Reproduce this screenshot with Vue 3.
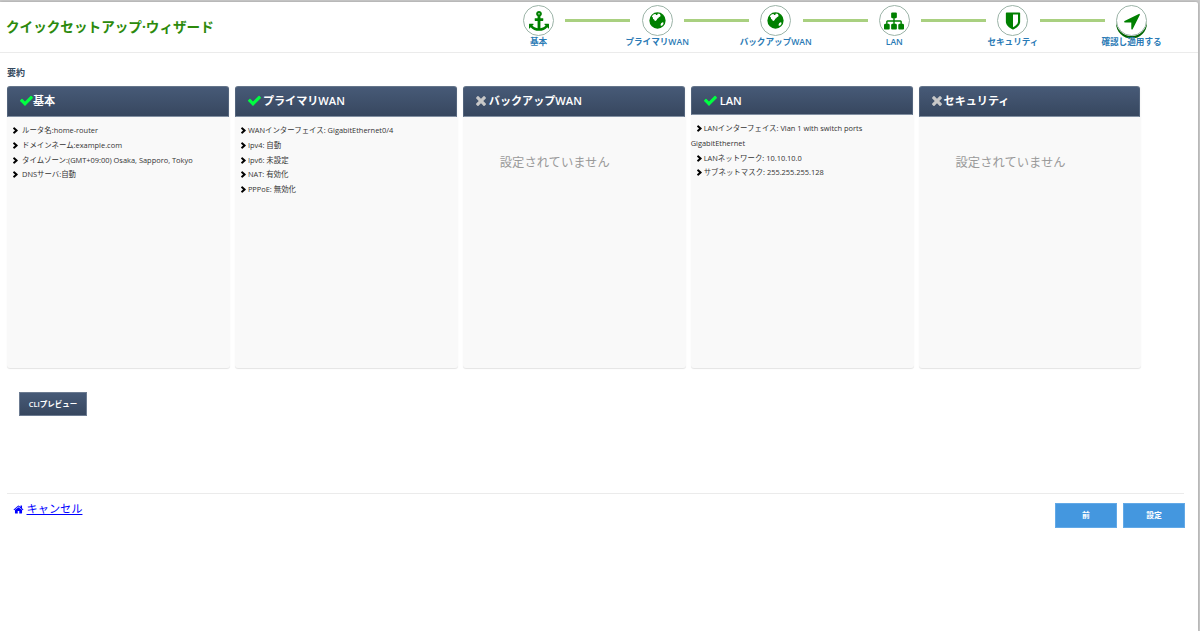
<script setup>
const icons = {
  check: 'M1671 566q0 40-28 68l-724 724-136 136q-28 28-68 28t-68-28l-136-136-362-362q-28-28-28-68t28-68l136-136q28-28 68-28t68 28l294 295 656-657q28-28 68-28t68 28l136 136q28 28 28 68z',
  times: 'M1490 1322q0 40-28 68l-136 136q-28 28-68 28t-68-28l-294-294-294 294q-28 28-68 28t-68-28l-136-136q-28-28-28-68t28-68l294-294-294-294q-28-28-28-68t28-68l136-136q28-28 68-28t68 28l294 294 294-294q28-28 68-28t68 28l136 136q28 28 28 68t-28 68l-294 294 294 294q28 28 28 68z',
  chevron: 'M1363 941l-742 662q-19 19-45 19t-45-19l-206-206q-19-19-19-45t19-45l431-411-431-411q-19-19-19-45t19-45l206-206q19-19 45-19t45 19l742 662q19 19 19 45t-19 45z',
  home: 'M1472 992v480q0 26-19 45t-45 19h-384v-384h-256v384h-384q-26 0-45-19t-19-45v-480q0-1 .5-3t.5-3l575-474 575 474q1 2 1 6zm223-69l-62 74q-8 9-21 11h-3q-13 0-21-7l-692-577-692 577q-12 8-24 7-13-2-21-11l-62-74q-8-10-7-23.5t11-21.5l719-599q32-26 76-26t76 26l244 204v-195q0-14 9-23t23-9h192q14 0 23 9t9 23v408l219 182q10 8 11 21.5t-7 23.5z',
  anchor: 'M960 256q0-26-19-45t-45-19-45 19-19 45 19 45 45 19 45-19 19-45zm832 928v352q0 22-20 30-8 2-12 2-12 0-23-9l-93-93q-119 143-318.5 226.5t-429.5 83.5-429.5-83.5-318.5-226.5l-93 93q-9 9-23 9-4 0-12-2-20-8-20-30v-352q0-14 9-23t23-9h352q22 0 30 20 8 19-7 35l-100 100q67 91 189.5 153.5t271.5 82.5v-647h-192q-26 0-45-19t-19-45v-128q0-26 19-45t45-19h192v-163q-58-34-93-92.5t-35-128.5q0-106 75-181t181-75 181 75 75 181q0 70-35 128.5t-93 92.5v163h192q26 0 45 19t19 45v128q0 26-19 45t-45 19h-192v647q149-20 271.5-82.5t189.5-153.5l-100-100q-15-16-7-35 8-20 30-20h352q14 0 23 9t9 23z',
  globe: 'M896 128a768 768 0 1 0 0 1536a768 768 0 1 0 0-1536zM400 440l150-130 160-30 60 90 100 0 60-130 190 40 60 130-20 110-130 60-70 110-90 40-50 110-110 110-80-30-50-110-100-60-30-160-90-60zM1240 1150l130-90 100 40-30 150-120 130-120 20-10-120z',
  sitemap: 'M1792 1248v320q0 40-28 68t-68 28h-320q-40 0-68-28t-28-68v-320q0-40 28-68t68-28h96v-192h-512v192h96q40 0 68 28t28 68v320q0 40-28 68t-68 28h-320q-40 0-68-28t-28-68v-320q0-40 28-68t68-28h96v-192h-512v192h96q40 0 68 28t28 68v320q0 40-28 68t-68 28h-320q-40 0-68-28t-28-68v-320q0-40 28-68t68-28h96v-192q0-52 38-90t90-38h512v-192h-96q-40 0-68-28t-28-68v-320q0-40 28-68t68-28h320q40 0 68 28t28 68v320q0 40-28 68t-68 28h-96v192h512q52 0 90 38t38 90v192h96q40 0 68 28t28 68z',
  shield: 'M1344 960v-640h-448v1137q119-63 213-137 235-184 235-360zm192-768v768q0 86-33.5 170.5t-83 150-118 127.5-126.5 103-121 77.5-89.5 49.5-42.5 20q-12 6-26 6t-26-6q-16-7-42.5-20t-89.5-49.5-121-77.5-126.5-103-118-127.5-83-150-33.5-170.5v-768q0-26 19-45t45-19h1152q26 0 45 19t19 45z',
  arrow: 'M1593 349l-640 1280q-17 35-57 35-5 0-15-2-22-5-35.5-22.5t-13.5-39.5v-576h-576q-22 0-39.5-13.5t-22.5-35.5 4-42 29-30l1280-640q13-7 29-7 27 0 45 19 15 14 18.5 34.5t-6.5 39.5z',
}
const steps = [
  { icon: 'anchor', label: '基本' },
  { icon: 'globe', label: 'プライマリWAN' },
  { icon: 'globe', label: 'バックアップWAN' },
  { icon: 'sitemap', label: 'LAN' },
  { icon: 'shield', label: 'セキュリティ' },
  { icon: 'arrow', label: '確認し適用する', current: true },
]
const cards = [
  { title: '基本', ok: true, kind: 'basic', rows: ['ルータ名:home-router', 'ドメインネーム:example.com', 'タイムゾーン:(GMT+09:00) Osaka, Sapporo, Tokyo', 'DNSサーバ:自動'] },
  { title: 'プライマリWAN', ok: true, kind: 'wan', rows: ['WANインターフェイス: GigabitEthernet0/4', 'Ipv4: 自動', 'Ipv6: 未設定', 'NAT: 有効化', 'PPPoE: 無効化'] },
  { title: 'バックアップWAN', ok: false, kind: 'backup', rows: [] },
  { title: 'LAN', ok: true, kind: 'lan', rows: ['LANインターフェイス: Vlan 1 with switch ports GigabitEthernet', 'LANネットワーク: 10.10.10.0', 'サブネットマスク: 255.255.255.128'] },
  { title: 'セキュリティ', ok: false, kind: 'security', rows: [] },
]
</script>

<template>
  <div class="frame">
    <div class="page">
      <header class="top">
        <h1>クイックセットアップ·ウィザード</h1>
        <nav class="steps">
          <template v-for="(s, i) in steps" :key="s.label">
            <i v-if="i" class="line"></i>
            <div class="step">
              <span class="circle" :class="{ current: s.current }">
                <svg viewBox="0 0 1792 1792" :class="s.icon"><path fill-rule="evenodd" :d="icons[s.icon]" /></svg>
              </span>
              <span class="label">{{ s.label }}</span>
            </div>
          </template>
        </nav>
      </header>
      <main>
        <h2>要約</h2>
        <div class="cards">
          <section v-for="c in cards" :key="c.title" class="card" :class="c.kind">
            <h3>
              <svg v-if="c.ok" viewBox="0 0 1792 1792" class="ok"><path :d="icons.check" /></svg>
              <svg v-else viewBox="192 0 1408 1792" class="no"><path :d="icons.times" /></svg>
              <span>{{ c.title }}</span>
            </h3>
            <ul v-if="c.rows.length">
              <li v-for="r in c.rows" :key="r"><svg viewBox="306 170 1100 1452"><path :d="icons.chevron" /></svg><span>{{ r }}</span></li>
            </ul>
            <p v-else>設定されていません</p>
          </section>
        </div>
        <button class="cli">CLIプレビュー</button>
      </main>
      <footer>
        <a href="#"><svg viewBox="0 0 1792 1792"><path :d="icons.home" /></svg><span>キャンセル</span></a>
        <div class="actions"><button>前</button><button>設定</button></div>
      </footer>
    </div>
  </div>
</template>

<style>
body { margin: 0; background: #fff; overflow: hidden; }
</style>
<style scoped>
* { box-sizing: border-box; }
.frame {
  height: 631px; padding: 2px 2px 0 0; background: #cacaca;
  font-family: "Open Sans", "Noto Sans CJK JP", sans-serif; color: #333;
}
.page { height: 629px; background: #fff; border-radius: 0 2px 0 0; box-shadow: 0 0 3px #999; }
.top { height: 51px; border-bottom: 1px solid #ebebeb; display: flex; justify-content: space-between; }
h1 { margin: 15px 0 0 6px; font-size: 13.6px; line-height: 20px; color: #2c8a0c; font-weight: 700; white-space: nowrap; }
.steps { display: flex; margin-right: 51px; padding-top: 3px; }
.step { width: 31px; display: flex; flex-direction: column; align-items: center; }
.circle {
  width: 31px; height: 31px; flex: none; border: 1px solid #9cb4a8; border-radius: 50%;
  display: flex; align-items: center; justify-content: center;
}
.circle.current { box-shadow: 0 2.5px 0 #006400; }
.circle svg { width: 20px; height: 20px; fill: #008000; }
.circle .globe { width: 19px; height: 19px; }
.label { font-size: 8.6px; line-height: 12px; font-weight: 600; color: #2a7ab5; white-space: nowrap; }
.line { width: 65px; height: 3px; margin: 14px 11.3px 0; background: #a9d080; }
main { height: 441px; margin: 0 14px 0 7px; border-bottom: 1px solid #ebebeb; }
h2 { margin: 0; padding-top: 13px; font-size: 9px; line-height: 14px; font-weight: 600; color: #34495e; }
.cards { display: flex; gap: 5px; margin-top: 6px; }
.card { width: 222.9px; height: 282px; background: #f9f9f9; border-radius: 3px; box-shadow: 0 1px 1px #e4e4e4; }
h3 {
  margin: 0 1px 0 0; height: 31px; padding: 0 0 2px 11px; border: 1px solid #8290a2; border-top-color: #65758a;
  border-left-color: #53647c; border-right-color: #53647c; border-radius: 3px 3px 0 0;
  background: linear-gradient(#475a77, #37475f); display: flex; align-items: center;
  color: #fff; font-size: 11.1px; font-weight: 600; line-height: 20px; white-space: nowrap;
}
h3 svg { flex: none; }
.ok { width: 15px; height: 15px; margin-right: 1px; fill: #00ff40; }
.no { width: 12px; height: 15px; margin-right: 2px; fill: #c8c8c8; }
.security .no { margin-right: 1px; }
.basic .ok { margin-right: -1px; }
.lan h3 { height: 29px; padding-bottom: 0; }
.lan .ok { margin-right: 2px; }
ul { list-style: none; margin: 0; padding: 6px 0 0 6px; }
li { font-size: 7.43px; line-height: 14.75px; color: #333; }
li svg { width: 5px; height: 7px; fill: #000; vertical-align: -1px; margin-right: 2px; }
.basic li svg { margin-right: 4px; }
.lan ul { padding-left: 0; }
.lan li svg { margin-left: 6px; }
p { margin: 34px 0 0; padding-left: 37px; font-size: 12.3px; line-height: 24px; color: #999; }
button { border: 0; padding: 0; font-family: inherit; color: #fff; font-weight: 700; }
.cli {
  display: block; margin: 24px 0 0 12px; width: 68px; height: 24px; border: 1px solid #6c7b91; padding-bottom: 2px;
  background: linear-gradient(#475a77, #37475f); font-size: 7.5px; font-weight: 600;
}
footer { display: flex; justify-content: space-between; padding: 9px 13px 0 13px; }
footer a { display: flex; height: 12px; align-items: center; color: #00f; font-size: 11.2px; line-height: 14px; text-decoration: none; }
footer a span { text-decoration: underline; }
footer a svg { width: 11px; height: 11px; margin-right: 2.5px; fill: #00f; }
.actions { display: flex; gap: 6px; }
.actions button { width: 62px; height: 25px; background: #4497df; border: 1px solid #62a9e7; padding-bottom: 2px; font-size: 7.8px; }
</style>
